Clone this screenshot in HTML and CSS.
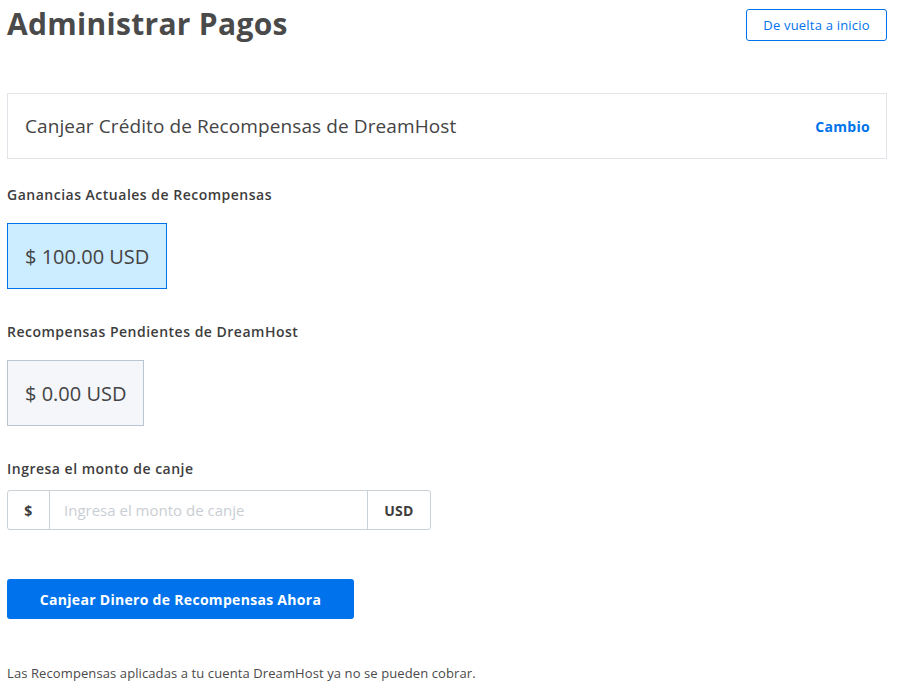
FILE: index.html
```html
<!DOCTYPE html>
<html lang="es">
<head>
  <meta charset="UTF-8" />
  <meta name="viewport" content="width=device-width, initial-scale=1.0"/>
  <title>Administrar Pagos</title>
  <link rel="stylesheet" href="styles.css">
</head>
<body>
  <div class="page">
    <div class="page-header">
      <h1>Administrar Pagos</h1>
      <a class="btn-outline" href="#">De vuelta a inicio</a>
    </div>

    <div class="card">
      <h2>Canjear Crédito de Recompensas de DreamHost</h2>
      <a class="card-link" href="#">Cambio</a>
    </div>

    <div class="field field-first">
      <div class="label">Ganancias Actuales de Recompensas</div>
      <div class="amount amount-active">$ 100.00 USD</div>
    </div>

    <div class="field">
      <div class="label">Recompensas Pendientes de DreamHost</div>
      <div class="amount">$ 0.00 USD</div>
    </div>

    <div class="field">
      <label class="label" for="monto">Ingresa el monto de canje</label>
      <div class="input-group">
        <span class="addon addon-left">$</span>
        <input id="monto" type="text" placeholder="Ingresa el monto de canje">
        <span class="addon addon-right">USD</span>
      </div>
    </div>

    <button class="btn-primary">Canjear Dinero de Recompensas Ahora</button>

    <p class="note">Las Recompensas aplicadas a tu cuenta DreamHost ya no se pueden cobrar.</p>
  </div>
</body>
</html>
```

FILE: styles.css
```css
body {
  margin: 0;
  font-family: "Open Sans", sans-serif;
  color: #3d3d3d;
  background: #fff;
}
.page {
  width: 880px;
  margin-left: 7px;
}
.page-header {
  display: flex;
  justify-content: space-between;
  align-items: flex-start;
  height: 93px;
}
h1 {
  margin: 3px 0 0;
  font-size: 30px;
  font-weight: 700;
  letter-spacing: 0.3px;
  color: #4a4a4a;
}
.btn-outline {
  margin-top: 9px;
  box-sizing: border-box;
  height: 32px;
  width: 141px;
  display: flex;
  align-items: center;
  justify-content: center;
  border: 1px solid #0073ec;
  border-radius: 3px;
  color: #0073ec;
  font-size: 13px;
  letter-spacing: 0.2px;
  text-decoration: none;
}
.card {
  box-sizing: border-box;
  height: 66px;
  border: 1px solid #e1e4e8;
  display: flex;
  align-items: center;
  justify-content: space-between;
  padding: 0 16px 0 17px;
}
.card h2 {
  margin: 0;
  font-size: 19px;
  font-weight: 400;
  letter-spacing: 0.1px;
  color: #444;
}
.card-link {
  color: #0073ec;
  font-size: 14px;
  font-weight: 700;
  letter-spacing: 0.3px;
  text-decoration: none;
}
.field {
  margin-top: 33px;
}
.field-first {
  margin-top: 26px;
}
.label {
  display: block;
  font-size: 14px;
  font-weight: 600;
  letter-spacing: 0.5px;
  color: #3d3d3d;
  height: 19px;
}
.amount {
  display: inline-flex;
  align-items: center;
  box-sizing: border-box;
  height: 66px;
  margin-top: 19px;
  padding: 0 17px;
  background: #f4f6fa;
  border: 1px solid #b9c5d1;
  font-size: 20px;
  color: #444;
}
.amount-active {
  background: #ccecff;
  border-color: #0073ec;
}
.input-group {
  display: flex;
  width: 424px;
  height: 40px;
  margin-top: 12px;
  box-sizing: border-box;
  border: 1px solid #c9d1d9;
  border-radius: 3px;
}
.addon {
  display: flex;
  align-items: center;
  justify-content: center;
  font-size: 14px;
  font-weight: 700;
  letter-spacing: 0.3px;
  color: #3d3d3d;
}
.addon-left {
  width: 41px;
  border-right: 1px solid #c9d1d9;
}
.addon-right {
  width: 62px;
  border-left: 1px solid #c9d1d9;
}
.input-group input {
  flex: 1;
  min-width: 0;
  border: 0;
  outline: none;
  padding: 0 14px;
  font-family: inherit;
  font-size: 15px;
  color: #3d3d3d;
}
.input-group input::placeholder {
  color: #c9ced4;
}
.btn-primary {
  display: block;
  margin-top: 49px;
  width: 347px;
  height: 40px;
  border: 0;
  border-radius: 3px;
  background: #0073ec;
  color: #fff;
  font-family: inherit;
  font-size: 14px;
  font-weight: 700;
  letter-spacing: 0.3px;
}
.note {
  margin: 45px 0 0;
  font-size: 13px;
  letter-spacing: 0.1px;
  color: #4a4a4a;
}
```
